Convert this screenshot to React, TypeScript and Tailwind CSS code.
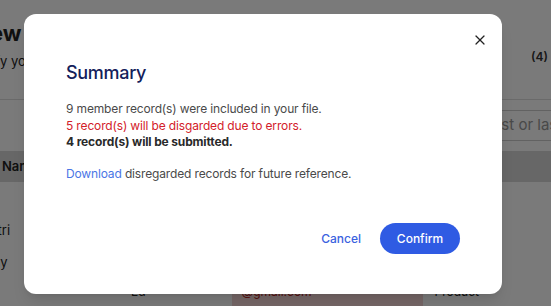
import { X } from "lucide-react";

function BackgroundPage() {
  return (
    <div className="flex h-full w-full flex-col bg-white font-['Inter',sans-serif] text-[#222]">
      {/* header */}
      <div className="flex h-[100px] justify-between border-b border-[#ddd]">
        <div className="flex w-[24px] flex-col overflow-hidden pt-[20px]">
          <div className="-ml-[56px] whitespace-nowrap text-[22px] font-bold leading-[26px]">Review</div>
          <div className="-ml-[29px] mt-[7px] whitespace-nowrap text-[13px] leading-[16px]">Verify your records</div>
        </div>
        <div className="pt-[48px] pr-[3px] text-[12px] font-semibold text-[#333]">(4)</div>
      </div>
      {/* search */}
      <div className="flex h-[52px] justify-end">
        <div className="mt-[10px] flex h-[31px] w-[144px] items-center overflow-hidden whitespace-nowrap border-y border-[#ccc] pl-[4px] text-[15px] text-[#999]">
          Search by first or last name
        </div>
      </div>
      {/* table header */}
      <div className="flex h-[31px] items-center whitespace-nowrap bg-[#d8d8d8] pl-[2px] text-[13px] font-semibold">
        Name
      </div>
      <div className="flex h-[62px] items-end whitespace-nowrap pb-[4px] text-[13px]">
        <span className="-ml-[18px]">Patri</span>
      </div>
      <div className="flex h-[32px] items-end whitespace-nowrap pb-[4px] text-[13px]">
        <span className="-ml-[20px]">Amy</span>
      </div>
      <div className="flex flex-1 items-start whitespace-nowrap text-[12px]">
        <span className="ml-[131px] mt-[7px]">Ed</span>
        <div className="ml-[86px] h-[30px] w-[191px] bg-[#f4d6d6] pl-[10px] pt-[7px] text-[#b02020]">
          @gmail.com
        </div>
        <span className="ml-[12px] mt-[7px]">Product</span>
      </div>
    </div>
  );
}

export default function App() {
  return (
    <div className="relative h-[306px] w-[551px] overflow-hidden">
      <BackgroundPage />
      <div className="absolute inset-0 flex items-start bg-black/[0.52] pl-[24px] pt-[14px]">
        <div className="relative flex h-[280px] w-[478px] flex-col rounded-[12px] bg-white px-[42px] pt-[48px] font-['Inter',sans-serif] shadow-lg">
          <button className="absolute right-[14px] top-[18px] text-[#222]">
            <X size={16} strokeWidth={1.8} />
          </button>
          <h2 className="text-[18px] font-medium leading-[22px] tracking-[-0.3px] text-[#13205a]">Summary</h2>
          <div className="mt-[17px] text-[12px] leading-[16.5px] tracking-[-0.15px]">
            <p className="text-[#4a4a4a]">9 member record(s) were included in your file.</p>
            <p className="text-[#d3202a]">5 record(s) will be disgarded due to errors.</p>
            <p className="font-bold text-[#2a2a2a]">4 record(s) will be submitted.</p>
          </div>
          <p className="mt-[15px] text-[12px] leading-[16.5px] tracking-[-0.15px] text-[#4a4a4a]">
            <a className="text-[#4a76e6]">Download</a> disregarded records for future reference.
          </p>
          <div className="mt-auto mb-[40px] flex items-center justify-end gap-[19px]">
            <button className="text-[12px] font-medium text-[#3a62e0]">Cancel</button>
            <button className="h-[31px] w-[80px] rounded-full bg-[#2f5be3] text-[12px] font-medium text-white">
              Confirm
            </button>
          </div>
        </div>
      </div>
    </div>
  );
}
